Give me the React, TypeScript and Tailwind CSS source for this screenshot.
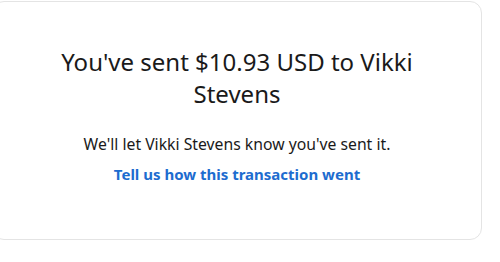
export default function App() {
  return (
    <div className="w-[500px] h-[262px] bg-white overflow-hidden" style={{ fontFamily: '"Noto Sans", "Open Sans", sans-serif' }}>
      <div className="-ml-2 mt-px w-[490px] h-[239px] border border-[#e4e4e4] rounded-xl flex flex-col items-center pt-[44px] text-center">
        <h1 className="max-w-[400px] text-[24px] leading-8 font-normal text-[#1a1a1a]">
          You've sent $10.93 USD to Vikki Stevens
        </h1>
        <p className="mt-[22px] text-[15.75px] leading-6 text-[#1a1a1a]">
          We'll let Vikki Stevens know you've sent it.
        </p>
        <a href="#" className="mt-[6px] text-[15px] leading-6 font-bold text-[#1d6ccf]">
          Tell us how this transaction went
        </a>
      </div>
    </div>
  );
}
